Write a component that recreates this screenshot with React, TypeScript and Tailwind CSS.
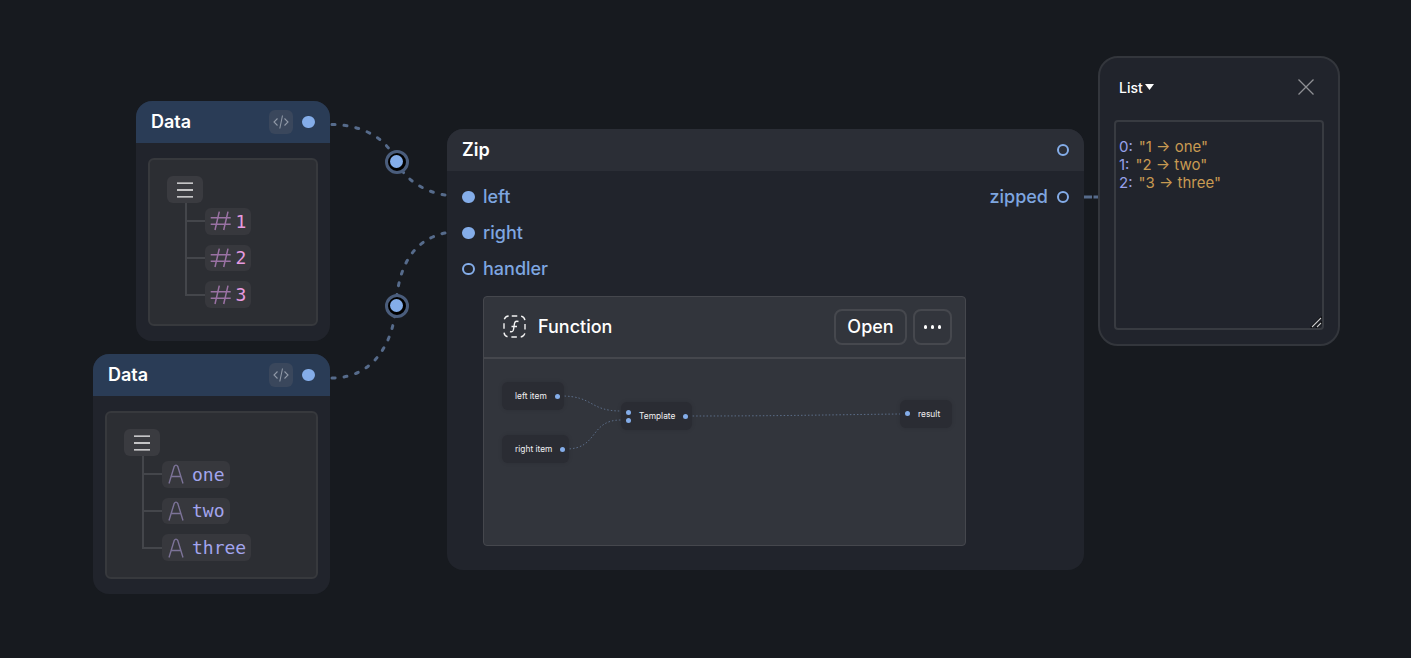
const sans = "font-['Inter','Noto_Sans',sans-serif]";
const mono = "font-['DejaVu_Sans_Mono','Liberation_Mono',monospace]";

function Handle({ filled = true, className = "" }: { filled?: boolean; className?: string }) {
  return (
    <span
      className={`block w-[12.5px] h-[12.5px] rounded-full shrink-0 border-2 border-[#84ade9] ${filled ? "bg-[#84ade9]" : "bg-transparent"} ${className}`}
    />
  );
}

function Hash() {
  return (
    <svg width="22" height="22" viewBox="0 0 22 22" fill="none" stroke="#9a72a4" strokeWidth="1.5" className="shrink-0 mr-[3.5px]">
      <path d="M0.7 7.7H20.7M0.7 14.3H20.7M9.3 1.7L5 20M18 1.7L13.7 20" />
    </svg>
  );
}

function LetterA() {
  return (
    <svg width="18" height="22" viewBox="0 0 18 22" fill="none" stroke="#7c7398" strokeWidth="1.4" className="shrink-0 mr-[7px]">
      <path d="M2 20.5L7.2 3.5Q9 0.8 10.8 3.5L16 20.5M4.2 13.5H13.8" />
    </svg>
  );
}

function Chip({ icon, text, color }: { icon: React.ReactNode; text: string; color: string }) {
  return (
    <div className="relative flex items-center">
      <span className="absolute left-[-20px] top-1/2 w-[20px] h-[2px] -mt-px bg-[#44464b]" />
      <div className={`h-[26.67px] flex items-center pl-[5px] pr-[5px] rounded-md bg-[#37383d] ${mono} text-[18px] ${color}`}>
        {icon}
        <span>{text}</span>
      </div>
    </div>
  );
}

function ListIcon() {
  return (
    <svg width="16" height="16" viewBox="0 0 16 16" stroke="#f2f2f2" strokeWidth="1.3" fill="none">
      <path d="M0 1.2H16M0 8H16M0 14.8H16" />
    </svg>
  );
}

function DataNode({
  cls,
  chips,
  iconBox,
}: {
  cls: string;
  chips: { text: string }[];
  iconBox: "num" | "str";
}) {
  return (
    <div className={`absolute rounded-2xl bg-[#21242c] overflow-hidden flex flex-col ${cls}`}>
      <div className="h-[42px] shrink-0 bg-[#2a3c56] flex items-center pl-[15px] pr-[15.5px]">
        <span className={`${sans} text-[18px] font-semibold text-white pb-[1px]`}>Data</span>
        <div className="ml-auto flex items-center gap-[9px]">
          <div className="w-6 h-6 rounded-md bg-[#3a475c] flex items-center justify-center">
            <svg width="16" height="16" viewBox="0 0 16 16" fill="none" stroke="#8f98a6" strokeWidth="1.1">
              <path d="M4.5 4.5L1 8L4.5 11.5M11.5 4.5L15 8L11.5 11.5M9.5 1.5L6.8 14.5" />
            </svg>
          </div>
          <Handle />
        </div>
      </div>
      <div className="flex-1 mx-3 mt-[15px] mb-[15px] rounded-md bg-[#2c2e33] border-2 border-[#37393d] pl-[17px] pt-4">
        <div className="w-9 h-[27px] rounded-md bg-[#3a3b40] flex items-center justify-center">
          <ListIcon />
        </div>
        <div className="relative ml-[18px] mt-[5px] pl-[20px] flex flex-col items-start gap-[10px]">
          <span className="absolute left-0 top-[-5px] bottom-[13px] w-[2px] bg-[#44464b]" />
          {chips.map((c) => (
            <Chip
              key={c.text}
              text={c.text}
              icon={iconBox === "num" ? <Hash /> : <LetterA />}
              color={iconBox === "num" ? "text-[#e79be0]" : "text-[#a3a5ee]"}
            />
          ))}
        </div>
      </div>
    </div>
  );
}

function MiniNode({ cls, children }: { cls: string; children: React.ReactNode }) {
  return (
    <div className={`absolute rounded-md bg-[#2a2c33] shadow-[0_0_4px_rgba(0,0,0,0.12)] flex items-center ${sans} text-[8.4px] text-[#f0f0f2] ${cls}`}>
      {children}
    </div>
  );
}

function MiniDot({ cls }: { cls: string }) {
  return <span className={`absolute w-[5px] h-[5px] rounded-full bg-[#84ade9] ${cls}`} />;
}

function Row({ filled, label }: { filled: boolean; label: string }) {
  return (
    <div className="h-9 flex items-center gap-[8.5px]">
      <Handle filled={filled} />
      <span className="text-[18px] font-medium text-[#7ea6e0] pb-[2px]">{label}</span>
    </div>
  );
}

function ZipNode() {
  return (
    <div className={`absolute left-[447px] top-[129px] w-[637px] h-[441px] rounded-2xl bg-[#21242c] overflow-hidden ${sans}`}>
      <div className="h-[42px] bg-[#2b2e36] flex items-center justify-between pl-[15px] pr-[15px]">
        <span className="text-[18px] font-semibold text-white pb-[2px]">Zip</span>
        <Handle filled={false} />
      </div>
      <div className="relative pl-[15px] pr-[15px] pt-[8px]">
        <div className="flex flex-col">
          <Row filled label="left" />
          <Row filled label="right" />
          <Row filled={false} label="handler" />
        </div>
        <div className="absolute right-[15px] top-[8px] h-9 flex items-center gap-[8.5px]">
          <span className="text-[18px] font-medium text-[#7ea6e0] pb-[2px]">zipped</span>
          <Handle filled={false} />
        </div>
      </div>
      <div className="ml-9 mt-[9px] w-[483px] h-[250px] rounded bg-[#32353c] border border-[#45474d] flex flex-col">
        <div className="h-[61.5px] shrink-0 border-b-2 border-[#45474d] flex items-center pl-[19px] pr-[13px]">
          <svg width="23" height="23" viewBox="0 0 23 23" fill="none" stroke="#f2f2f2" strokeWidth="1.4">
            <rect x="1" y="1" width="21" height="21" rx="5" strokeDasharray="5.5 3.925" strokeDashoffset="-2.75" />
            <path d="M15.5 6.5Q12 5.5 11.5 8.5L10.5 14.5Q10 17.5 7 16.5M8.5 11.5H14" />
          </svg>
          <span className="ml-3 text-[18px] font-medium text-white">Function</span>
          <div className="ml-auto flex items-center gap-[6px]">
            <button className="w-[73px] h-9 rounded-lg border-2 border-[#46484e] text-[18px] font-medium text-white pb-[1px]">Open</button>
            <button className="w-[39px] h-9 rounded-lg border-2 border-[#46484e] flex items-center justify-center gap-[3.5px]">
              <span className="w-[3.5px] h-[3.5px] rounded-full bg-white" />
              <span className="w-[3.5px] h-[3.5px] rounded-full bg-white" />
              <span className="w-[3.5px] h-[3.5px] rounded-full bg-white" />
            </button>
          </div>
        </div>
        <div className="relative flex-1">
          <svg className="absolute left-0 top-0" width="481" height="187" fill="none" stroke="#5b6d88" strokeWidth="1" strokeDasharray="1.5 2">
            <path d="M77 37C110 37 105 52 137 52" />
            <path d="M82 90C115 90 105 61 137 61" />
            <path d="M205 57C300 57 330 56 416 55" />
          </svg>
          <MiniNode cls="left-[18px] top-[23.5px] w-[62px] h-7 pl-[13px]">
            left item
            <MiniDot cls="left-[53px] top-[12px]" />
          </MiniNode>
          <MiniNode cls="left-[18px] top-[76.5px] w-[67px] h-7 pl-[13px]">
            right item
            <MiniDot cls="left-[58px] top-[12px]" />
          </MiniNode>
          <MiniNode cls="left-[137px] top-[43.5px] w-[71px] h-7 pl-[18px]">
            Template
            <MiniDot cls="left-[5px] top-[8px]" />
            <MiniDot cls="left-[5px] top-[16px]" />
            <MiniDot cls="left-[62px] top-[12px]" />
          </MiniNode>
          <MiniNode cls="left-[416px] top-[41.5px] w-[52px] h-7 pl-[18px]">
            result
            <MiniDot cls="left-[5px] top-[11px]" />
          </MiniNode>
        </div>
      </div>
    </div>
  );
}

function ListNode() {
  return (
    <div className={`absolute left-[1098px] top-[56px] w-[242px] h-[290px] rounded-[20px] bg-[#21242c] border-2 border-[#33363c] flex flex-col px-[14px] ${sans}`}>
      <div className="h-[62px] shrink-0 flex items-center pl-[5px] pb-[4px]">
        <span className="text-[14px] font-medium text-white">List</span>
        <svg width="9" height="6" viewBox="0 0 9 6" className="ml-[2px]">
          <path d="M0 0H9L4.5 6Z" fill="#fff" />
        </svg>
        <svg width="16" height="16" viewBox="0 0 16 16" className="ml-auto mr-[10px]" fill="none" stroke="#8f9094" strokeWidth="1.3">
          <path d="M0.5 0.5L15.5 15.5M15.5 0.5L0.5 15.5" />
        </svg>
      </div>
      <div className="relative h-[210px] w-[210px] rounded bg-[#21242c] border-2 border-[#383b41] pt-[16px] pl-[3px] text-[15px] leading-[18px] text-[#c89a52]">
        <div className="flex gap-[6px]"><span className="text-[#97a1ea]">0:</span><span>"1 → one"</span></div>
        <div className="flex gap-[6px]"><span className="text-[#97a1ea]">1:</span><span>"2 → two"</span></div>
        <div className="flex gap-[6px]"><span className="text-[#97a1ea]">2:</span><span>"3 → three"</span></div>
        <svg className="absolute right-0 bottom-0" width="12" height="12" viewBox="0 0 12 12" fill="none">
          <path d="M1 12L12 1M6 12L12 6" stroke="#0d0e10" strokeWidth="2.6" />
          <path d="M2 11L11 2M7 11L11 7" stroke="#c9cacc" strokeWidth="1.1" />
        </svg>
      </div>
    </div>
  );
}

function Reroute({ cls }: { cls: string }) {
  return (
    <div className={`absolute w-6 h-6 rounded-full border-[3px] border-[#4a5d7c] bg-black flex items-center justify-center ${cls}`}>
      <span className="w-[13px] h-[13px] rounded-full bg-[#84ade9]" />
    </div>
  );
}

export default function App() {
  return (
    <div className="relative w-full h-[658px] overflow-hidden bg-[#171a1f]">
      <svg className="absolute left-0 top-0" width="1411" height="658" fill="none" stroke="#566b8b" strokeWidth="3" strokeDasharray="3 9" strokeLinecap="round">
        <path d="M332 124.5C362 125 386 137 397 162" />
        <path d="M445 195C425 192 405 180 397 162" />
        <path d="M332 378C372 378 393 345 396 306" />
        <path d="M445 233C412 240 398 268 396 306" />
        <path d="M1084 197H1099" strokeDasharray="8 1.5" strokeLinecap="butt" />
      </svg>
      <DataNode
        cls="left-[136px] top-[101px] w-[194px] h-[240px]"
        iconBox="num"
        chips={[{ text: "1" }, { text: "2" }, { text: "3" }]}
      />
      <DataNode
        cls="left-[93px] top-[354px] w-[237px] h-[240px]"
        iconBox="str"
        chips={[{ text: "one" }, { text: "two" }, { text: "three" }]}
      />
      <Reroute cls="left-[384.5px] top-[149.5px]" />
      <Reroute cls="left-[384.5px] top-[293.5px]" />
      <ZipNode />
      <ListNode />
    </div>
  );
}
